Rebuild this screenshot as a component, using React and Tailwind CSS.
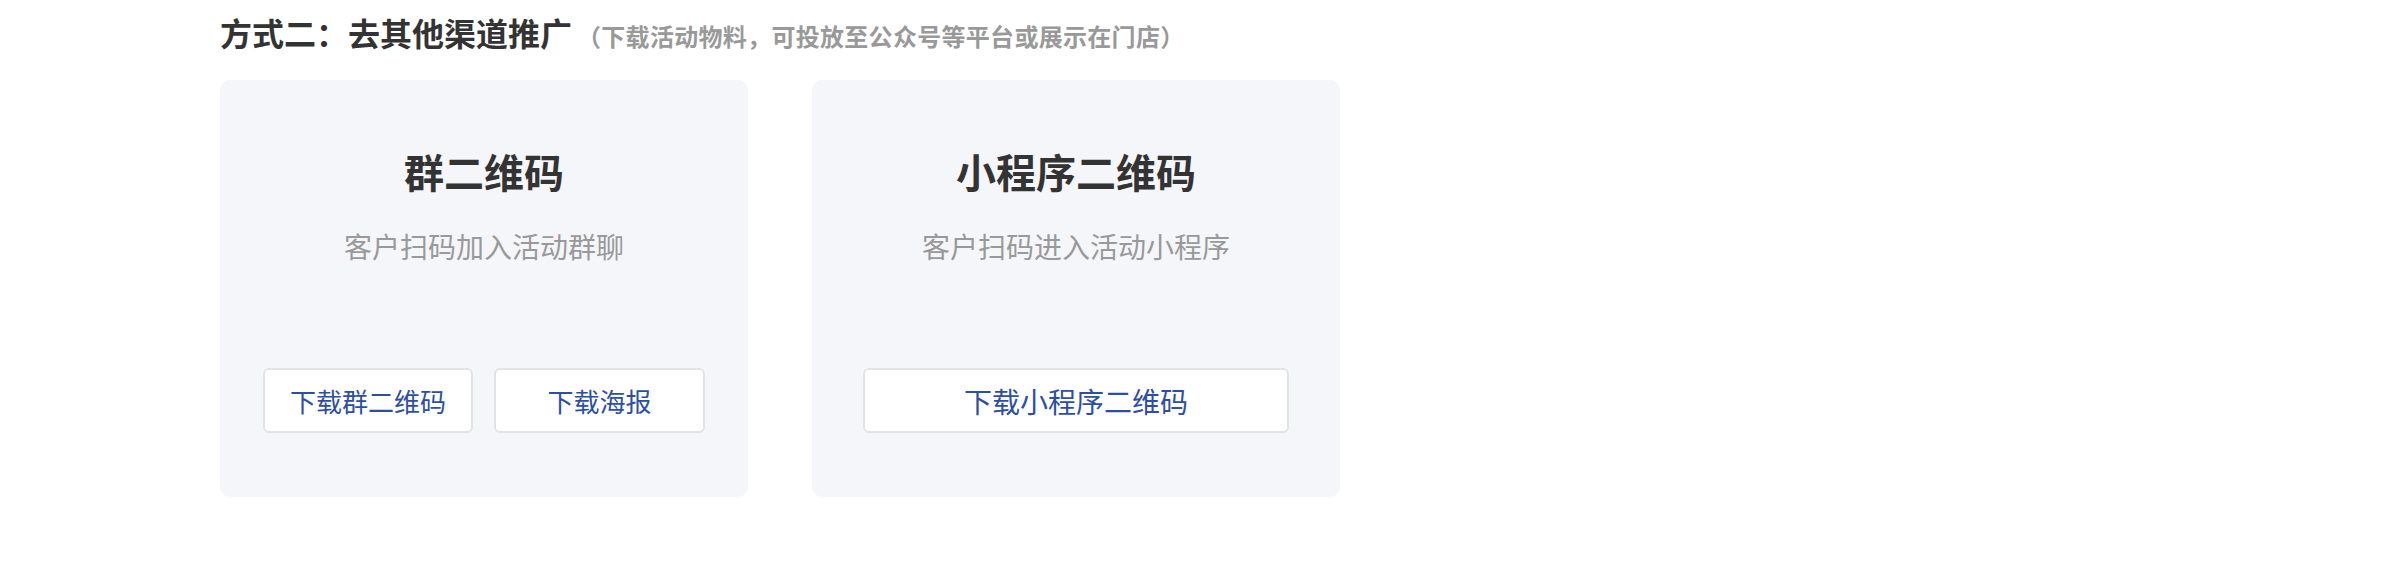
export default function App() {
  const font = { fontFamily: '"Noto Sans CJK SC", "Noto Sans", sans-serif' };
  return (
    <div className="w-full h-[562px] bg-white pl-[220px]" style={font}>
      <div className="pt-[12px] h-[80px] flex items-baseline whitespace-nowrap">
        <span className="text-[32px] leading-[40px] font-bold text-[#333333]">方式二：去其他渠道推广</span>
        <span className="ml-[5px] text-[24px] tracking-[0.3px] leading-[40px] font-bold text-[#999999]">（下载活动物料，可投放至公众号等平台或展示在门店）</span>
      </div>
      <div className="flex gap-[64px]">
        <div className="w-[528px] h-[417px] rounded-[10px] bg-[#f5f6fa] flex flex-col items-center">
          <div className="mt-[63px] text-[40px] leading-[56px] font-bold text-[#333333]">群二维码</div>
          <div className="mt-[27px] text-[28px] leading-[40px] text-[#999999]">客户扫码加入活动群聊</div>
          <div className="mt-[102px] flex gap-[21px]">
            <button className="w-[210px] h-[65px] bg-white border-2 border-[#e3e3e3] rounded-[6px] text-[26px] text-[#2d4ea5]">下载群二维码</button>
            <button className="w-[211px] h-[65px] bg-white border-2 border-[#e3e3e3] rounded-[6px] text-[26px] text-[#2d4ea5]">下载海报</button>
          </div>
        </div>
        <div className="w-[528px] h-[417px] rounded-[10px] bg-[#f5f6fa] flex flex-col items-center">
          <div className="mt-[63px] text-[40px] leading-[56px] font-bold text-[#333333]">小程序二维码</div>
          <div className="mt-[27px] text-[28px] leading-[40px] text-[#999999]">客户扫码进入活动小程序</div>
          <div className="mt-[102px] flex">
            <button className="w-[426px] h-[65px] bg-white border-2 border-[#e3e3e3] rounded-[6px] text-[28px] text-[#2d4ea5]">下载小程序二维码</button>
          </div>
        </div>
      </div>
    </div>
  );
}
